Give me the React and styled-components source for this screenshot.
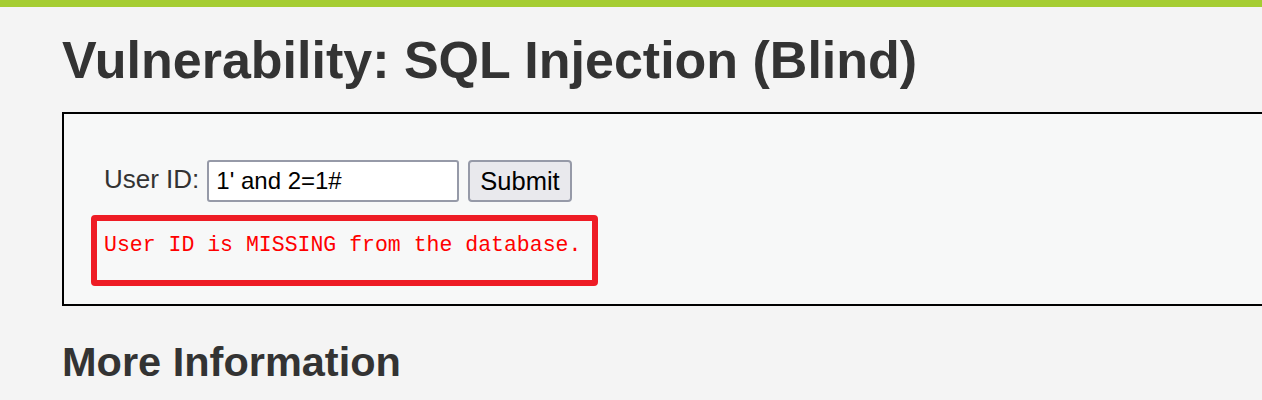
import React from "react";
import styled, { createGlobalStyle } from "styled-components";

const Global = createGlobalStyle`
  html, body {
    margin: 0;
    padding: 0;
    background: #f4f4f4;
    overflow: hidden;
  }
  body {
    font-family: "Liberation Sans", Arial, sans-serif;
    color: #333;
  }
`;

const TopBar = styled.div`
  height: 7px;
  background: #a5cd32;
`;

const Main = styled.main`
  padding-left: 62px;
`;

const Title = styled.h1`
  margin: 23px 0 22px;
  font-size: 52px;
  line-height: 60px;
  font-weight: bold;
  color: #333;
  white-space: nowrap;
`;

const VulnBox = styled.div`
  width: 1300px;
  box-sizing: border-box;
  border: 2px solid #000;
  background: #f7f8f8;
  padding: 46px 0 18px 40px;
`;

const FormRow = styled.form`
  display: flex;
  align-items: center;
  height: 42px;
`;

const Label = styled.label`
  font-size: 26px;
  color: #333;
  margin-right: 8px;
  padding-bottom: 4px;
`;

const TextInput = styled.input`
  box-sizing: border-box;
  width: 252px;
  height: 42px;
  padding: 0 7px;
  border: 2px solid #969aa8;
  border-radius: 3px;
  background: #fff;
  color: #000;
  font-family: "Liberation Sans", Arial, sans-serif;
  font-size: 24px;
  outline: none;
`;

const SubmitButton = styled.button`
  box-sizing: border-box;
  height: 42px;
  margin-left: 9px;
  padding: 0 10px;
  border: 2px solid #969aa8;
  border-radius: 4px;
  background: #e9e9ed;
  color: #000;
  font-family: "Liberation Sans", Arial, sans-serif;
  font-size: 25.5px;
`;

const Annotated = styled.div`
  display: inline-block;
  margin: 13px 0 0 -13px;
  border: 6px solid #ee1c25;
  border-radius: 4px;
  padding: 11px 11px 22px 7px;
`;

const Result = styled.pre`
  margin: 0;
  font-family: "Liberation Mono", "Courier New", monospace;
  font-size: 21.5px;
  line-height: 26px;
  color: #ff0000;
`;

const SubTitle = styled.h2`
  margin: 32px 0 0;
  font-size: 41.5px;
  line-height: 48px;
  font-weight: bold;
  color: #333;
`;

export default function App() {
  return (
    <>
      <Global />
      <TopBar />
      <Main>
        <Title>Vulnerability: SQL Injection (Blind)</Title>
        <VulnBox>
          <FormRow onSubmit={(e) => e.preventDefault()}>
            <Label>User ID:</Label>
            <TextInput type="text" defaultValue="1' and 2=1#" />
            <SubmitButton type="submit">Submit</SubmitButton>
          </FormRow>
          <Annotated>
            <Result>User ID is MISSING from the database.</Result>
          </Annotated>
        </VulnBox>
        <SubTitle>More Information</SubTitle>
      </Main>
    </>
  );
}
